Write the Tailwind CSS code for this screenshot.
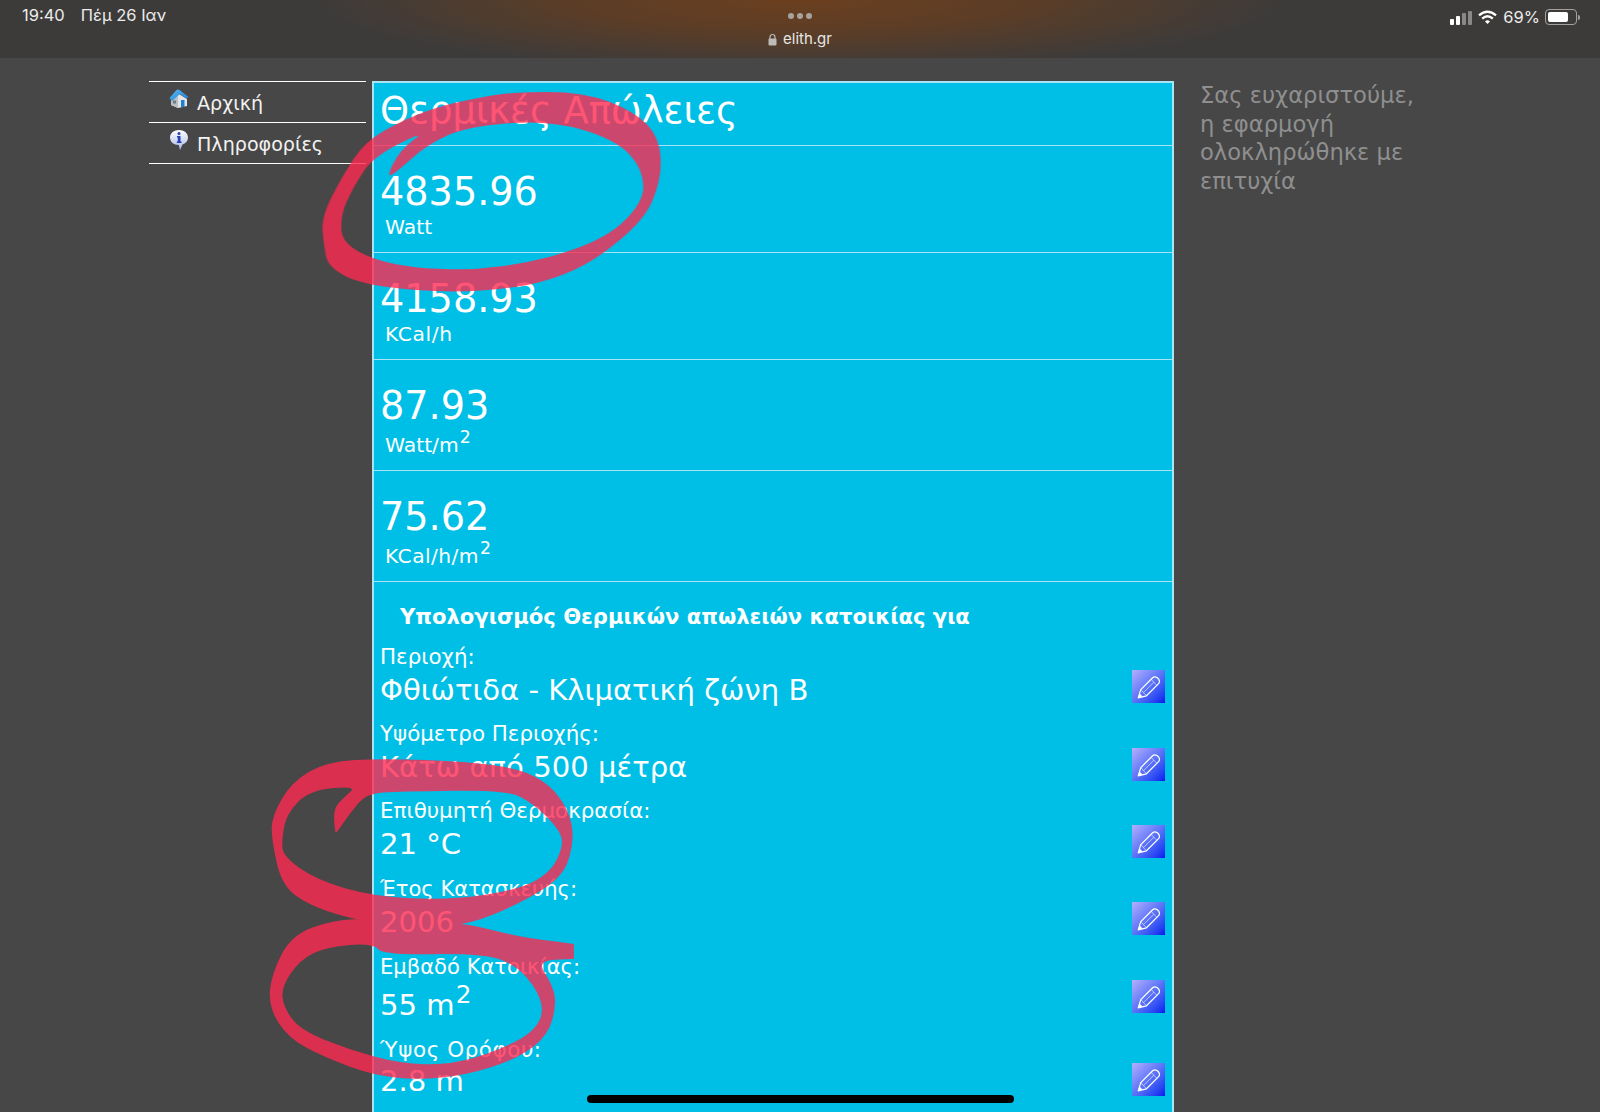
<!DOCTYPE html>
<html lang="el">
<head>
    <meta charset="UTF-8">
    <title>elith.gr</title>
    <script src="https://cdn.jsdelivr.net/npm/@tailwindcss/browser@4"></script>
</head>
<body class="bg-[#474747] h-[1112px] overflow-hidden relative font-['DejaVu_Sans',sans-serif] text-white">
    <svg class="absolute w-0 h-0">
        <symbol id="pencil" viewBox="0 0 32 32">
            <g transform="translate(-1 2)" fill="none" stroke="white" stroke-linejoin="round">
                <path d="M7 25 L9.5 17 L21 5.5 Q23 3.8 25.5 5.5 L27 7 Q28.5 9.5 26.5 11.5 L15 23 Z" stroke-width="1.2"/>
                <path d="M9.5 17 L15 23 M19.5 7 L25 12.8" stroke-width="0.8" stroke-opacity="0.7"/>
                <path d="M12.3 19.8 L22.3 9.8" stroke-width="0.8" stroke-opacity="0.7"/>
                <path d="M7 25 L8.3 20.7 L11.3 23.7 Z" fill="white" stroke="none"/>
            </g>
        </symbol>
        <linearGradient id="bubble" x1="0" y1="0" x2="0" y2="1">
            <stop offset="0" stop-color="#ffffff"/>
            <stop offset="1" stop-color="#a9b6e6"/>
        </linearGradient>
        <linearGradient id="roof" x1="0" y1="0" x2="1" y2="1">
            <stop offset="0" stop-color="#5ab8f2"/>
            <stop offset="1" stop-color="#1c7fd2"/>
        </linearGradient>
    </svg>

    <!-- ipad status bar -->
    <header class="h-[58px] relative flex justify-between pl-[22px] pr-[20px] pt-[7px] bg-[radial-gradient(ellipse_480px_70px_at_50%_0%,#6b3f1f_0%,#5c3d26_45%,#3d3b3a_100%)] font-['Inter',sans-serif]">
        <div class="flex gap-[16px] -mt-[2px] text-[16.5px] leading-5 text-[#ececec]">
            <span>19:40</span>
            <span>Πέμ 26 Ιαν</span>
        </div>
        <div class="absolute left-0 right-0 top-[13px] flex flex-col items-center">
            <div class="flex gap-[3px]">
                <span class="w-[6px] h-[6px] rounded-full bg-[#a9a39e]"></span>
                <span class="w-[6px] h-[6px] rounded-full bg-[#a9a39e]"></span>
                <span class="w-[6px] h-[6px] rounded-full bg-[#a9a39e]"></span>
            </div>
            <div class="flex items-center gap-[6px] mt-[10px] text-[15px] leading-5 text-[#e8e6e4]">
                <svg width="9" height="13" viewBox="0 0 9 13"><path d="M2 6V4a2.5 2.5 0 0 1 5 0v2" fill="none" stroke="#bdbab7" stroke-width="1.2"/><rect x="0.5" y="5.5" width="8" height="7" rx="1" fill="#bdbab7"/></svg>
                <span>elith.gr</span>
            </div>
        </div>
        <div class="flex items-center h-5 text-[16.5px] text-[#ececec]">
            <div class="flex items-end gap-[1.5px] h-[16px] mr-[6px]">
                <span class="w-[4.5px] h-[6px] rounded-[1px] bg-white"></span>
                <span class="w-[4.5px] h-[9px] rounded-[1px] bg-white"></span>
                <span class="w-[4.5px] h-[12px] rounded-[1px] bg-[#8a8886]"></span>
                <span class="w-[4.5px] h-[14px] rounded-[1px] bg-[#8a8886]"></span>
            </div>
            <svg width="19" height="15" viewBox="0 0 19 15" class="mr-[6px]">
                <path d="M1 5.3 Q9.5 -1.8 18 5.3" fill="none" stroke="white" stroke-width="2.4"/>
                <path d="M4.2 8.6 Q9.5 4 14.8 8.6" fill="none" stroke="white" stroke-width="2.4"/>
                <path d="M7 11.4 Q9.5 9.3 12 11.4 L9.5 14 Z" fill="white"/>
            </svg>
            <span>69%</span>
            <div class="ml-[5px] w-[32px] h-[16px] rounded-[4px] border border-[#a3a1a0] p-[2px]">
                <div class="w-[20px] h-full rounded-[2px] bg-white"></div>
            </div>
            <div class="w-[2px] h-[5px] ml-[1px] rounded-r-sm bg-[#a3a1a0]"></div>
        </div>
    </header>

    <div class="flex items-start pt-[23px] pl-[149px]">
        <!-- left menu -->
        <nav class="w-[217px] mr-[6px] text-[19.1px] leading-[40px] text-[#f2f2f2] border-b border-white">
            <div class="h-[41px] border-t border-white flex items-center pl-[20px]">
                <svg width="20" height="20" viewBox="0 0 20 20" class="mr-[8px] -mt-[7px]">
                    <path d="M2 11 L10 5 L18 10 V17 L9 19 L2 16 Z" fill="#e3e6e8"/>
                    <path d="M2 11 L9 7 V19 L2 16 Z" fill="#b9bfc4"/>
                    <path d="M0.5 9 L7 1.5 Q8.5 0 10.5 1 L19.5 8 L17.5 9.5 L11 5 L3 12 Z" fill="url(#roof)"/>
                    <rect x="12" y="11" width="3.5" height="7" fill="#1f7fd0"/>
                    <rect x="4" y="11.5" width="3" height="3" fill="#6f7c88"/>
                </svg>
                <span class="mt-[4px]">Αρχική</span>
            </div>
            <div class="h-[41px] border-t border-white flex items-center pl-[20px]">
                <svg width="20" height="22" viewBox="0 0 20 22" class="mr-[8px] -mt-[7px]">
                    <path d="M10 1 C15 1 19 4 19 8.5 C19 12 16.5 14.5 13.5 15.5 L11 21 L9.8 16 C4.5 16 1 13 1 8.5 C1 4 5 1 10 1 Z" fill="url(#bubble)"/>
                    <circle cx="10" cy="4.5" r="1.5" fill="#2340b8"/>
                    <path d="M8 7 H11.5 V12.5 H12.5 V14 H7.8 V12.5 H8.8 V8.5 H8 Z" fill="#2340b8"/>
                </svg>
                <span class="mt-[4px]">Πληροφορίες</span>
            </div>
        </nav>

        <!-- main panel -->
        <main class="w-[802px] h-[1031px] overflow-hidden bg-[#00bfe6] border-2 border-b-0 border-[#a8e4f6]">
            <h1 class="h-[63px] pl-[6px] text-[36.9px] leading-[56px] border-b border-[#a8e4f6]">Θερμικές Απώλειες</h1>
            <section class="h-[107px] pl-[6px] pt-[22px] border-b border-[#a8e4f6]">
                <div class="text-[38.2px] leading-[48px]">4835.96</div>
                <div class="pl-[5px] text-[20.3px] leading-[22px]">Watt</div>
            </section>
            <section class="h-[107px] pl-[6px] pt-[22px] border-b border-[#a8e4f6]">
                <div class="text-[38.2px] leading-[48px]">4158.93</div>
                <div class="pl-[5px] text-[20.3px] leading-[22px] tracking-[0.6px]">KCal/h</div>
            </section>
            <section class="h-[111px] pl-[6px] pt-[22px] border-b border-[#a8e4f6]">
                <div class="text-[38.2px] leading-[48px]">87.93</div>
                <div class="pl-[5px] text-[20.3px] leading-[30px]">Watt/m<sup class="ml-[1px] text-[85%] -top-[.5em]">2</sup></div>
            </section>
            <section class="h-[111px] pl-[6px] pt-[22px] border-b border-[#a8e4f6]">
                <div class="text-[38.2px] leading-[48px]">75.62</div>
                <div class="pl-[5px] text-[20.3px] leading-[30px] tracking-[0.4px]">KCal/h/m<sup class="ml-[1px] text-[85%] -top-[.5em]">2</sup></div>
            </section>

            <h2 class="pl-[26px] pt-[21px] text-[21.1px] leading-[28px] font-bold">Υπολογισμός Θερμικών απωλειών κατοικίας για</h2>

            <div class="mt-[17px] pl-[6px] pr-[7px]">
                <div class="h-[77.4px] flex items-center justify-between">
                    <div class="-mt-[24px]">
                        <div class="text-[21.4px] leading-[30px]">Περιοχή:</div>
                        <div class="text-[29.1px] leading-[36px]">Φθιώτιδα - Κλιματική ζώνη Β</div>
                    </div>
                    <button class="w-[33px] h-[33px] bg-linear-to-br from-[#b6aefc] to-[#1208ee]"><svg class="w-full h-full"><use href="#pencil"/></svg></button>
                </div>
                <div class="h-[77.4px] flex items-center justify-between">
                    <div class="-mt-[24px]">
                        <div class="text-[21.4px] leading-[30px]">Υψόμετρο Περιοχής:</div>
                        <div class="text-[29.1px] leading-[36px]">Κάτω από 500 μέτρα</div>
                    </div>
                    <button class="w-[33px] h-[33px] bg-linear-to-br from-[#b6aefc] to-[#1208ee]"><svg class="w-full h-full"><use href="#pencil"/></svg></button>
                </div>
                <div class="h-[77.4px] flex items-center justify-between">
                    <div class="-mt-[24px]">
                        <div class="text-[21.4px] leading-[30px]">Επιθυμητή Θερμοκρασία:</div>
                        <div class="text-[29.1px] leading-[36px]">21 °C</div>
                    </div>
                    <button class="w-[33px] h-[33px] bg-linear-to-br from-[#b6aefc] to-[#1208ee]"><svg class="w-full h-full"><use href="#pencil"/></svg></button>
                </div>
                <div class="h-[77.4px] flex items-center justify-between">
                    <div class="-mt-[24px]">
                        <div class="text-[21.1px] leading-[30px]">Έτος Κατασκευής:</div>
                        <div class="text-[29.1px] leading-[36px]">2006</div>
                    </div>
                    <button class="w-[33px] h-[33px] bg-linear-to-br from-[#b6aefc] to-[#1208ee]"><svg class="w-full h-full"><use href="#pencil"/></svg></button>
                </div>
                <div class="h-[83px] flex items-center justify-between">
                    <div class="-mt-[18px]">
                        <div class="text-[21.1px] leading-[30px]">Εμβαδό Κατοικίας:</div>
                        <div class="text-[29.1px] leading-[46px]">55 m<sup class="ml-[1px] text-[85%] -top-[.5em]">2</sup></div>
                    </div>
                    <button class="w-[33px] h-[33px] -mt-[6px] bg-linear-to-br from-[#b6aefc] to-[#1208ee]"><svg class="w-full h-full"><use href="#pencil"/></svg></button>
                </div>
                <div class="h-[77.4px] flex items-center justify-between">
                    <div class="-mt-[26px]">
                        <div class="text-[21.4px] leading-[30px] tracking-[0.6px]">Ύψος Ορόφου:</div>
                        <div class="text-[29.1px] leading-[32px]">2.8 m</div>
                    </div>
                    <button class="w-[33px] h-[33px] bg-linear-to-br from-[#b6aefc] to-[#1208ee]"><svg class="w-full h-full"><use href="#pencil"/></svg></button>
                </div>
            </div>
        </main>

        <!-- thanks text -->
        <aside class="w-[260px] ml-[26px] text-[22.65px] leading-[28.5px] text-[#8f8f8f]">Σας ευχαριστούμε,<br>η εφαρμογή<br>ολοκληρώθηκε με<br>επιτυχία</aside>
    </div>

    <!-- red marker drawn on top of the screenshot -->
    <svg class="absolute left-0 top-0 pointer-events-none" width="1600" height="1112" viewBox="0 0 1600 1112">
        <g fill="#ff2a50" opacity="0.8" fill-rule="evenodd">
            <path transform="translate(300 70) scale(.3333)" class="mark" data-pts="70,520 65,440 125,320 195,215 300,155 400,115 520,85 640,66 850,66 1005,125 1080,205 1085,330 1025,465 800,628 500,672 200,648 85,595|380,180 300,240 260,320 285,310 380,225 500,170 750,150 950,210 1030,300 1030,400 900,520 600,600 300,595 130,530 120,440 160,350 220,260"/>
            <path transform="translate(250 740) scale(.3333)" class="mark" data-pts="65,300 65,230 125,125 230,65 400,55 650,65 805,85 905,135 965,230 970,320 935,415 800,495 660,552 560,556 400,552 300,535 175,495 95,435|320,138 285,170 250,205 255,280 262,275 300,220 350,160 450,155 770,150 850,190 930,270 940,320 900,400 800,450 600,480 370,470 200,420 100,350 95,300 110,220 180,150"/>
            <path transform="translate(250 740) scale(.3333)" class="mark" data-pts="250,540 125,585 65,700 55,800 115,895 230,955 370,1005 500,1020 650,1005 805,955 895,885 920,790 905,730 860,662 972,656 972,656 972,612 972,612 800,590 660,552 500,540 370,536|95,740 150,660 230,620 370,610 400,645 700,640 810,680 885,790 860,870 750,930 600,975 450,970 300,930 150,870 100,800"/>
        </g>
    </svg>

    <!-- home indicator -->
    <div class="absolute left-[587px] top-[1095px] w-[427px] h-[8px] rounded-full bg-black"></div>

    <script>
        // smooth the marker outlines: quadratic curves through the midpoints
        function smooth(pts) {
            let d = '';
            for (let i = 0; i < pts.length; i++) {
                let p = pts[i];
                let n = pts[(i + 1) % pts.length];
                let mid = [(p[0] + n[0]) / 2, (p[1] + n[1]) / 2];
                if (i == 0) {
                    let l = pts[pts.length - 1];
                    d += 'M' + (l[0] + p[0]) / 2 + ' ' + (l[1] + p[1]) / 2;
                }
                d += 'Q' + p[0] + ' ' + p[1] + ' ' + mid[0] + ' ' + mid[1];
            }
            return d + 'Z';
        }
        document.querySelectorAll('.mark').forEach(function(el) {
            let d = el.dataset.pts.split('|').map(function(s) {
                return smooth(s.split(' ').map(function(c) { return c.split(',').map(Number); }));
            });
            el.setAttribute('d', d.join(''));
        });
    </script>
</body>
</html>
